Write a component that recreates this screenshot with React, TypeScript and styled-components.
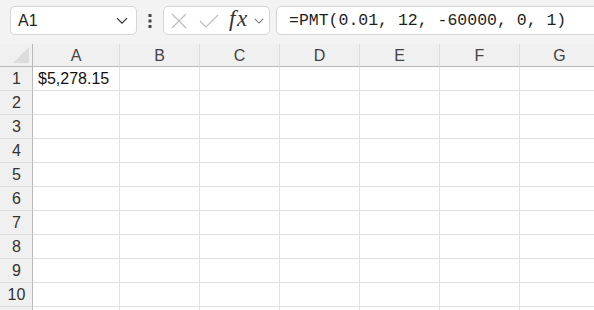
import React from 'react';
import styled, { createGlobalStyle } from 'styled-components';

const GlobalStyle = createGlobalStyle`
  body {
    margin: 0;
    background: #f3f3f3;
    font-family: 'Liberation Sans', Arial, sans-serif;
    overflow: hidden;
  }
`;

const Toolbar = styled.div`
  display: flex;
  align-items: center;
  height: 44px;
  padding: 0 0 3px 10px;
  box-sizing: border-box;
`;

const Box = styled.div<{ w?: number }>`
  height: 29px;
  box-sizing: border-box;
  background: #fff;
  border: 1px solid #d6d6d6;
  border-radius: 5px;
  display: flex;
  align-items: center;
  width: ${(p) => (p.w ? `${p.w}px` : 'auto')};
`;

const NameBox = styled(Box)`
  padding: 0 8px 0 7px;
  justify-content: space-between;
  font-size: 16px;
  color: #1f1f1f;
`;

const Dots = styled.div`
  width: 26px;
  display: flex;
  justify-content: center;
`;

const FxBox = styled(Box)`
  padding: 0 4px 0 7px;
`;

const FxText = styled.span`
  font-family: 'Liberation Serif', 'Times New Roman', serif;
  font-style: italic;
  font-size: 23px;
  color: #333;
  margin: -3px 5px 0 10px;
  letter-spacing: 1.5px;
`;

const FormulaBox = styled(Box)`
  flex: 1;
  margin-left: 6px;
  margin-right: -10px;
  padding-left: 12px;
  font-family: 'Liberation Mono', 'DejaVu Sans Mono', monospace;
  font-size: 16.5px;
  color: #1f1f1f;
`;

const Grid = styled.div`
  display: grid;
  grid-template-columns: 33px 87px repeat(6, 80px);
  grid-template-rows: 23px repeat(10, 24px) 10px;
  background: #fff;
`;

const Corner = styled.div`
  background: #f0f0f0;
  border-bottom: 1px solid #bababa;
  border-right: 1px solid #bababa;
  position: relative;
  overflow: hidden;
  &::after {
    content: '';
    position: absolute;
    right: 3px;
    bottom: 3px;
    border-style: solid;
    border-width: 0 0 16px 16px;
    border-color: transparent transparent #dcdcdc transparent;
  }
`;

const ColHead = styled.div`
  background: #f0f0f0;
  border-bottom: 1px solid #bababa;
  border-right: 1px solid #dcdcdc;
  display: flex;
  align-items: center;
  justify-content: center;
  font-size: 16px;
  color: #444;
  padding-top: 1px;
`;

const RowHead = styled.div`
  background: #f0f0f0;
  border-right: 1px solid #bababa;
  border-bottom: 1px solid #dcdcdc;
  display: flex;
  align-items: center;
  justify-content: center;
  font-size: 16px;
  color: #333;
  padding-left: 1px;
`;

const Cell = styled.div`
  border-right: 1px solid #e1e1e1;
  border-bottom: 1px solid #e1e1e1;
  display: flex;
  align-items: center;
  padding-left: 5px;
  font-size: 16px;
  color: #111;
  white-space: nowrap;
`;

const Chevron = ({ size = 12, color = '#333' }: { size?: number; color?: string }) => (
  <svg width={size} height={size * 0.6} viewBox="0 0 12 7" fill="none">
    <path d="M1 1l5 5 5-5" stroke={color} strokeWidth="1.3" />
  </svg>
);

const columns = ['A', 'B', 'C', 'D', 'E', 'F', 'G'];
const rows = [1, 2, 3, 4, 5, 6, 7, 8, 9, 10];

export default function App() {
  return (
    <>
      <GlobalStyle />
      <Toolbar>
        <NameBox w={127}>
          <span>A1</span>
          <Chevron />
        </NameBox>
        <Dots>
          <svg width="4" height="14" viewBox="0 0 4 14">
            <rect x="0.5" y="0" width="3" height="3" fill="#444" />
            <rect x="0.5" y="5.5" width="3" height="3" fill="#444" />
            <rect x="0.5" y="11" width="3" height="3" fill="#444" />
          </svg>
        </Dots>
        <FxBox w={107}>
          <svg width="16" height="16" viewBox="0 0 16 16" fill="none">
            <path d="M1 1l14 14M15 1L1 15" stroke="#bdbdbd" strokeWidth="1.2" />
          </svg>
          <svg width="20" height="16" viewBox="0 0 20 16" fill="none" style={{ marginLeft: 12 }}>
            <path d="M1 8l6 6L19 2" stroke="#bdbdbd" strokeWidth="1.2" />
          </svg>
          <FxText>fx</FxText>
          <Chevron size={10} color="#777" />
        </FxBox>
        <FormulaBox>=PMT(0.01, 12, -60000, 0, 1)</FormulaBox>
      </Toolbar>
      <Grid>
        <Corner />
        {columns.map((c) => (
          <ColHead key={c}>{c}</ColHead>
        ))}
        {rows.map((r) => (
          <React.Fragment key={r}>
            <RowHead>{r}</RowHead>
            {columns.map((c) => (
              <Cell key={c}>{r === 1 && c === 'A' ? '$5,278.15' : ''}</Cell>
            ))}
          </React.Fragment>
        ))}
        <RowHead />
        {columns.map((c) => (
          <Cell key={c} />
        ))}
      </Grid>
    </>
  );
}
